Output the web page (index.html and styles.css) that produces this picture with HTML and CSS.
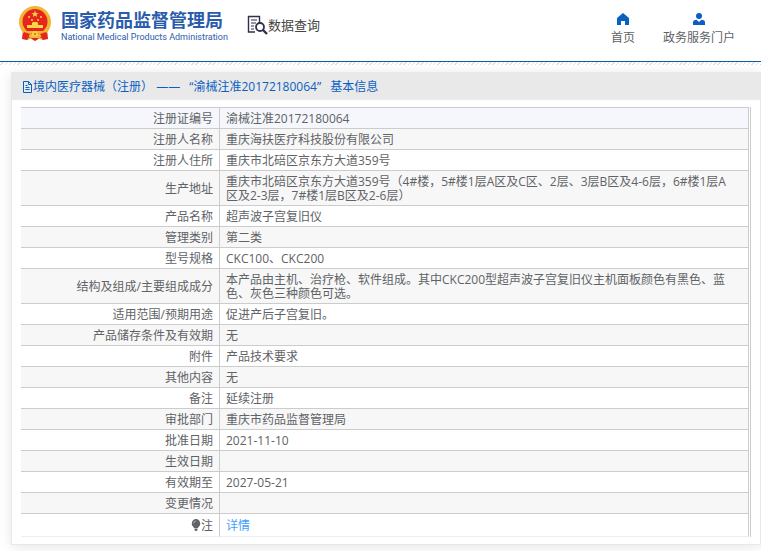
FILE: index.html
```html
<!DOCTYPE html>
<html lang="zh-CN">
<head>
<meta charset="utf-8">
<title>数据查询</title>
<link rel="stylesheet" href="styles.css">
</head>
<body>
<header class="top">
  <a class="brand" href="#">
    <svg class="emblem" viewBox="0 0 34 36" aria-hidden="true">
      <path d="M5 24L4 33l5 1 3-2 5 3 5-3 3 2 5-1-1-9z" fill="#d9231c"/>
      <circle cx="17" cy="16" r="16" fill="#f2b632"/>
      <circle cx="17" cy="15.500" r="12.500" fill="#e6261d"/>
      <path d="M17 4.500l.9 2.400h2.600l-2 1.600.7 2.500-2.200-1.500-2.200 1.500.7-2.500-2-1.600h2.600z" fill="#f9d548"/>
      <g fill="#f9d548"><circle cx="11" cy="11" r="1"/><circle cx="23" cy="11" r="1"/><circle cx="14" cy="14" r="1"/><circle cx="20" cy="14" r="1"/>
      <path d="M14 17l1-1h4l1 1v2h5v3H9v-3h5z"/></g>
      <path d="M5 25h24l-3 4-5-2h-8l-5 2z" fill="#f2b632"/>
      <path d="M6 26l6 2-3 5-4-1zM28 26l-6 2 3 5 4-1z" fill="#e6261d"/>
      <circle cx="17" cy="28" r="3" fill="#f9d548"/><circle cx="17" cy="28" r="1.300" fill="#d98a1c"/>
      <path d="M10 33q7-4 14 0" fill="none" stroke="#f2b632" stroke-width="1.500"/>
    </svg>
    <span class="names"><span class="cn">国家药品监督管理局</span><span class="en">National Medical Products Administration</span></span>
  </a>
  <div class="query">
    <svg class="search-icon" viewBox="0 0 21 20" aria-hidden="true" fill="none" stroke="#30304a">
      <path d="M8 17H1.500V1.500h11V8" stroke-width="1.400"/>
      <path d="M4 5h6M4 8h5M4 11h3M4 14h3" stroke-width="1.200"/>
      <circle cx="13" cy="12" r="4" stroke-width="1.800"/><path d="M16 15l4 4" stroke-width="2.400"/>
    </svg>
    <span>数据查询</span>
  </div>
  <nav class="nav">
    <a href="#"><svg viewBox="0 0 12 12" aria-hidden="true"><path d="M6 0l6 5v7H8V8H4v4H0V5z" fill="#0b5fc1"/></svg>首页</a>
    <a href="#"><svg viewBox="0 0 12 12" aria-hidden="true"><circle cx="6" cy="3" r="3" fill="#0b5fc1"/><path d="M0 12V9.500Q0 7 3.500 6.800L6 9l2.500-2.200Q12 7 12 9.500V12z" fill="#0b5fc1"/></svg>政务服务门户</a>
  </nav>
</header>
<main class="card">
  <h1 class="title">
    <svg viewBox="0 0 11 12" aria-hidden="true" fill="none" stroke="#0b5fc1"><path d="M1.500.5h5l3 3v8h-8zM6.500.5v3h3M3.500 4.500h2M3.500 6.500h4M3.500 8.500h4"/></svg><span>境内医疗器械（注册）</span> <span>——</span> <span class="quoted">“渝械注准20172180064”</span> <span>基本信息</span>
  </h1>
  <div class="frame">
  <table class="info">
    <tr><th scope="row">注册证编号</th><td>渝械注准20172180064</td></tr>
    <tr><th scope="row">注册人名称</th><td>重庆海扶医疗科技股份有限公司</td></tr>
    <tr><th scope="row">注册人住所</th><td>重庆市北碚区京东方大道359号</td></tr>
    <tr><th scope="row">生产地址</th><td>重庆市北碚区京东方大道359号（4#楼，5#楼1层A区及C区、2层、3层B区及4-6层，6#楼1层A区及2-3层，7#楼1层B区及2-6层）</td></tr>
    <tr><th scope="row">产品名称</th><td>超声波子宫复旧仪</td></tr>
    <tr><th scope="row">管理类别</th><td>第二类</td></tr>
    <tr><th scope="row">型号规格</th><td>CKC100、CKC200</td></tr>
    <tr><th scope="row">结构及组成/主要组成成分</th><td>本产品由主机、治疗枪、软件组成。其中CKC200型超声波子宫复旧仪主机面板颜色有黑色、蓝色、灰色三种颜色可选。</td></tr>
    <tr><th scope="row">适用范围/预期用途</th><td>促进产后子宫复旧。</td></tr>
    <tr><th scope="row">产品储存条件及有效期</th><td>无</td></tr>
    <tr><th scope="row">附件</th><td>产品技术要求</td></tr>
    <tr><th scope="row">其他内容</th><td>无</td></tr>
    <tr><th scope="row">备注</th><td>延续注册</td></tr>
    <tr><th scope="row">审批部门</th><td>重庆市药品监督管理局</td></tr>
    <tr><th scope="row">批准日期</th><td>2021-11-10</td></tr>
    <tr><th scope="row">生效日期</th><td></td></tr>
    <tr><th scope="row">有效期至</th><td>2027-05-21</td></tr>
    <tr><th scope="row">变更情况</th><td></td></tr>
    <tr class="note"><th scope="row"><svg class="bulb" viewBox="0 0 10 12" aria-hidden="true"><path d="M5 0a4.500 4.500 0 0 1 2.500 8L7 9H3l-.5-1A4.500 4.500 0 0 1 5 0zM3.500 9.500h3V11l-1 1h-1l-1-1z" fill="#606266"/><path d="M2.500 4.500Q2.500 2.500 5 2" fill="none" stroke="#bbb" stroke-width=".8"/></svg>注</th><td><a href="#">详情</a></td></tr>
  </table>
  </div>
</main>
</body>
</html>
```
FILE: styles.css
```css
* { box-sizing: border-box; }
body {
  margin: 0;
  background: #fff;
  color: #606266;
  font-family: "Open Sans", "Noto Sans CJK SC", sans-serif;
  font-size: 12px;
  line-height: 14px;
}
a { text-decoration: none; color: inherit; }
.top {
  display: flex;
  align-items: flex-start;
  height: 65px;
  padding: 0 26px 0 18px;
  background: linear-gradient(#0b5ba8, #0b5ba8) 0 61px / 100% 1px no-repeat,
    repeating-linear-gradient(135deg, #fff 0 2px, #e2e2e2 2px 3px) 0 62px / 100% 3px no-repeat;
}
.brand { display: flex; gap: 9px; padding-top: 6px; }
.emblem { width: 34px; height: 36px; }
.names { display: flex; flex-direction: column; color: #2b5cac; white-space: nowrap; padding-top: 4px; }
.cn { font-family: "Noto Sans CJK SC", sans-serif; font-weight: 700; font-size: 18px; line-height: 19px; }
.en { font-family: Roboto, sans-serif; font-weight: 400; font-size: 9px; line-height: 16px; }
.query {
  display: flex;
  align-items: center;
  margin-left: 19px;
  padding-top: 15px;
  color: #444;
  font-family: "Noto Sans CJK SC", sans-serif;
  font-size: 13px;
  line-height: 20px;
}
.search-icon { width: 21px; height: 20px; }
.nav { display: flex; gap: 28px; margin-left: auto; padding-top: 13px; }
.nav a { display: flex; flex-direction: column; align-items: center; gap: 5px; line-height: 16px; }
.nav svg { width: 12px; height: 12px; }
.card {
  margin: 7px 0 6px 11px;
  border: 1px solid #e6e8eb;
  border-top: 0;
  padding-bottom: 7px;
  box-shadow: 0 2px 12px rgba(0, 0, 0, .1);
}
.title {
  margin: 0;
  padding: 1px 10px 0;
  height: 28px;
  border-bottom: 1px solid #ebebeb;
  background: #e9e9e9;
  color: #0b5fc1;
  font-size: 12px;
  font-weight: 400;
  line-height: 28px;
  white-space: nowrap;
}
.title svg { width: 11px; height: 12px; vertical-align: -2px; }
.quoted { margin: 0 6px; }
.frame {
  margin: 7px 9px 0;
  padding-right: 1px;
  border-right: 1px solid #ccc;
}
.info { width: 100%; border-collapse: separate; border-spacing: 0; table-layout: fixed; }
th, td {
  height: 21px;
  padding: 4px 6px 2px;
  border-top: 1px solid #ccc;
  border-right: 1px solid #ccc;
  font-weight: 400;
  text-align: left;
}
th { width: 199px; text-align: right; }
td { padding-right: 14px; }
tr:nth-child(even) { background: #f7f7f7; }
tr:first-child { background: #f5f7fc; }
.note th, .note td { height: 24px; border-bottom: 1px solid #ebeef5; }
.note a { color: #409eff; }
.bulb { width: 10px; height: 12px; vertical-align: -1px; }
```
